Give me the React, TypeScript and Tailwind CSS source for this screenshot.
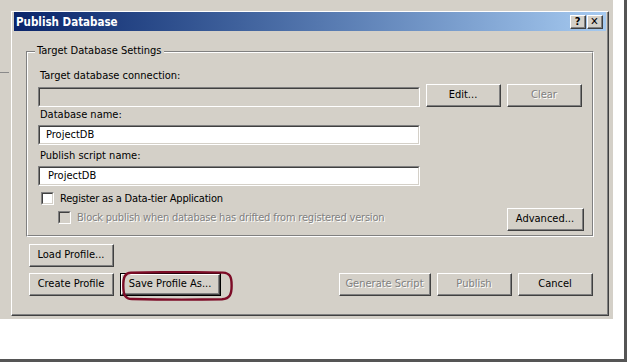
import React from "react";

const font = "font-['DejaVu_Sans_Condensed','Liberation_Sans',Arial,sans-serif]";

const Btn = ({
  children,
  className = "",
  disabled = false,
}: {
  children: React.ReactNode;
  className?: string;
  disabled?: boolean;
}) => (
  <div
    className={`h-[23px] border border-t-white border-l-white border-r-[#404040] border-b-[#404040] ${className}`}
  >
    <div className="h-full flex items-center justify-center border-r border-b border-r-[#808080] border-b-[#808080]">
      <span
        className={`text-[11px] leading-[14px] ${
          disabled ? "text-[#808080] [text-shadow:1px_1px_0_#ffffff]" : "text-black"
        }`}
      >
        {children}
      </span>
    </div>
  </div>
);

const TextBox = ({
  value = "",
  disabled = false,
  pad = "pl-[6px]",
}: {
  value?: string;
  disabled?: boolean;
  pad?: string;
}) => (
  <div className="w-[382px] h-[20px] border border-t-[#808080] border-l-[#808080] border-r-white border-b-white">
    <div
      className={`h-full flex items-center border border-t-[#404040] border-l-[#404040] border-r-[#d4d0c8] border-b-[#d4d0c8] ${pad} ${
        disabled ? "bg-[#d4d0c8]" : "bg-white"
      }`}
    >
      <span className="text-[11px] leading-[14px] text-black">{value}</span>
    </div>
  </div>
);

const Check = ({ disabled = false }: { disabled?: boolean }) => (
  <div className="w-[13px] h-[13px] shrink-0 border border-t-[#808080] border-l-[#808080] border-r-white border-b-white">
    <div
      className={`h-full border border-t-[#404040] border-l-[#404040] border-r-[#d4d0c8] border-b-[#d4d0c8] ${
        disabled ? "bg-[#d4d0c8]" : "bg-white"
      }`}
    />
  </div>
);

const Label = ({ children }: { children: React.ReactNode }) => (
  <div className="pl-[2px] h-[14px] text-[11px] leading-[14px] text-black">{children}</div>
);

const TitleButton = ({ children }: { children: React.ReactNode }) => (
  <div className="w-[16px] h-[14px] border border-t-white border-l-white border-r-[#404040] border-b-[#404040] bg-[#d4d0c8]">
    <div className="h-full flex items-center justify-center border-r border-b border-r-[#808080] border-b-[#808080]">
      <span className="text-[11px] leading-[11px] font-bold text-black">{children}</span>
    </div>
  </div>
);

export default function App() {
  return (
    <div className={`w-[629px] h-[364px] bg-white ${font}`}>
      <div className="w-[627px] h-[362px] border-r-[3px] border-b-[3px] border-r-[#555555] border-b-[#555555]">
        <div className="w-[613px] h-[319px] bg-[#d4d0c8] flex">
          {/* bit of the window behind */}
          <div className="w-[11px] pt-[72px]">
            <div className="w-[9px] h-px bg-[#8a8a8a]" />
          </div>

          {/* dialog */}
          <div className="mt-[11px] w-[598px] h-[305px] border border-t-white border-l-white border-r-[#404040] border-b-[#404040]">
            <div className="h-full flex flex-col border-r border-b border-r-[#808080] border-b-[#808080] pl-[2px] pr-px pb-px">
              {/* title bar */}
              <div className="h-[19px] shrink-0 flex items-center justify-between pl-[2px] pr-[3px] bg-gradient-to-r from-[#0a246a] to-[#a6caf0]">
                <span className="text-[11.5px] leading-[14px] font-bold text-white">Publish Database</span>
                <div className="flex gap-px">
                  <TitleButton>?</TitleButton>
                  <TitleButton>✕</TitleButton>
                </div>
              </div>

              {/* body */}
              <div className="flex flex-col px-[12px] pt-[20px]">
                {/* group box */}
                <div className="relative border border-t-[#808080] border-l-[#808080] border-r-white border-b-white">
                  <span className="absolute -top-[8px] left-[8px] px-[2px] bg-[#d4d0c8] text-[11px] leading-[14px] text-black">
                    Target Database Settings
                  </span>
                  <div className="flex flex-col border border-t-white border-l-white border-r-[#808080] border-b-[#808080] pl-[10px] pr-[10px] pt-[16px] pb-[4px]">
                    <Label>Target database connection:</Label>
                    <div className="mt-px flex h-[23px]">
                      <div className="mt-[3px]">
                        <TextBox disabled />
                      </div>
                      <Btn className="ml-[6px] w-[75px]">Edit...</Btn>
                      <Btn className="ml-[6px] w-[75px]" disabled>
                        Clear
                      </Btn>
                    </div>
                    <div className="mt-px">
                      <Label>Database name:</Label>
                    </div>
                    <div className="mt-[3px]">
                      <TextBox value="ProjectDB" />
                    </div>
                    <div className="mt-[4px]">
                      <Label>Publish script name:</Label>
                    </div>
                    <div className="mt-[3px]">
                      <TextBox value="ProjectDB" pad="pl-[8px]" />
                    </div>
                    <div className="mt-[6px] flex items-center h-[13px] pl-[3px]">
                      <Check />
                      <span className="ml-[6px] text-[11px] leading-[14px] tracking-[-0.2px] text-black">
                        Register as a Data-tier Application
                      </span>
                    </div>
                    <div className="mt-[3px] flex h-[23px]">
                      <div className="mt-[3px] flex items-center h-[13px] pl-[20px]">
                        <Check disabled />
                        <span className="ml-[6px] text-[11px] leading-[14px] tracking-[-0.2px] text-[#808080] [text-shadow:1px_1px_0_#ffffff]">
                          Block publish when database has drifted from registered version
                        </span>
                      </div>
                      <Btn className="ml-auto -mr-[2px] w-[77px]">Advanced...</Btn>
                    </div>
                  </div>
                </div>

                {/* profile + action buttons */}
                <div className="mt-[7px] pl-[3px]">
                  <Btn className="w-[85px]">Load Profile...</Btn>
                </div>
                <div className="mt-[6px] flex pl-[3px] pr-px">
                  <Btn className="w-[85px]">Create Profile</Btn>
                  <div className="relative ml-[6px]">
                    <div className="w-[101px] h-[23px] border border-black">
                      <Btn className="w-full h-full">Save Profile As...</Btn>
                    </div>
                    <svg
                      className="absolute left-[2px] -top-[2px] pointer-events-none"
                      width="111"
                      height="30"
                      viewBox="0 0 111 30"
                    >
                      <path
                        d="M9 1.8 C40 0.8 80 1.2 101 1.6 C108 2 109.6 6 109.6 14 C109.8 23 108 27.8 100 28.2 C70 28.8 35 28.6 10 28 C3 27.8 1.4 24 1.3 15 C1.2 6 3 2 9 1.8 Z"
                        fill="none"
                        stroke="#7c0b26"
                        strokeWidth="2.4"
                      />
                    </svg>
                  </div>
                  <div className="ml-auto flex gap-[6px]">
                    <Btn className="w-[92px]" disabled>
                      Generate Script
                    </Btn>
                    <Btn className="w-[75px]" disabled>
                      Publish
                    </Btn>
                    <Btn className="w-[75px]">Cancel</Btn>
                  </div>
                </div>
              </div>
            </div>
          </div>
        </div>
      </div>
    </div>
  );
}
